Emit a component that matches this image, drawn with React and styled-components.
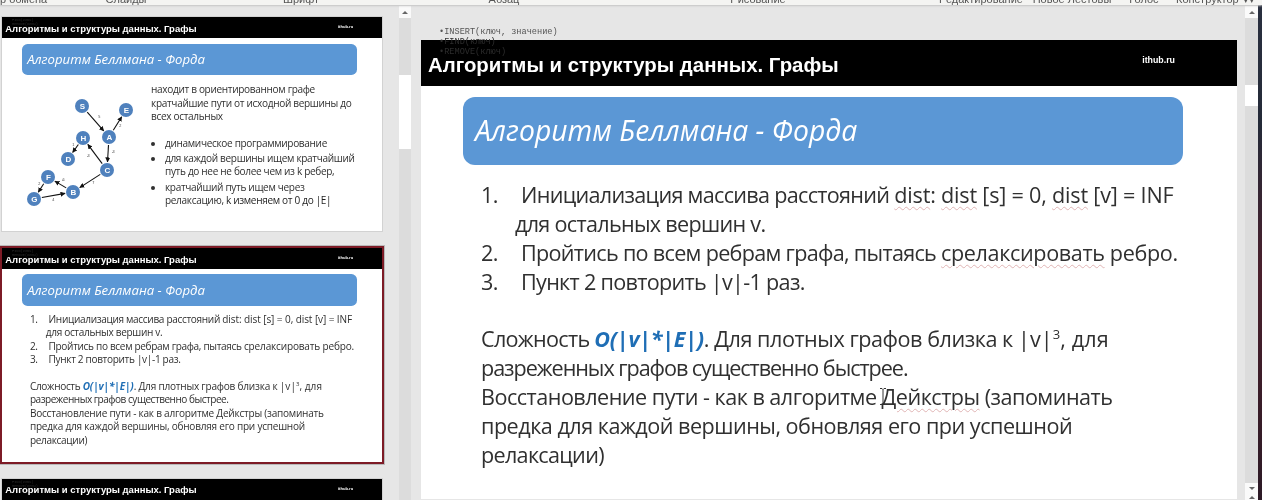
import React from "react";
import styled, { createGlobalStyle } from "styled-components";

const Global = createGlobalStyle`
  html, body { margin: 0; padding: 0; background: #e6e6e6; }
  body { width: 1262px; height: 500px; overflow: hidden; }
`;

const Page = styled.div`
  position: relative;
  width: 1262px;
  height: 500px;
  display: flex;
  flex-direction: column;
  overflow: hidden;
  background: #e6e6e6;
  filter: blur(0.35px);
`;

const Ribbon = styled.div`
  position: relative;
  z-index: 3;
  height: 5px;
  flex: none;
  display: flex;
  align-items: flex-start;
  overflow: hidden;
  background: #f4f4f2;
  box-shadow: 0 1px 2px #c4c4c4;
  font: 11px "Liberation Sans", sans-serif;
  color: #555;
`;

const RibbonGroup = styled.div`
  width: ${(p) => p.$w}px;
  flex: none;
  height: 11px;
  margin-top: -7px;
  line-height: 12px;
  white-space: nowrap;
  text-align: ${(p) => (p.$left ? "left" : "center")};
`;

const Work = styled.div`
  flex: 1;
  min-height: 0;
  display: flex;
`;

const SlideList = styled.div`
  width: 399px;
  flex: none;
  padding: 12px 0 0 0;
  overflow: hidden;
`;

const ThumbFrame = styled.div`
  position: relative;
  width: 380px;
  margin: 0 0 17px 2px;
  outline: ${(p) => (p.$active ? "2px solid #7d1b26" : "1px solid #d2d2d2")};
  box-shadow: ${(p) => (p.$active ? "0 0 0 3px #b9b9b9" : "none")};
`;

const ThumbZoom = styled.div`
  zoom: 0.4657;
  background: #fff;
`;

const ThumbGhost = styled.div`
  position: absolute;
  left: 10px;
  top: 1px;
  font: 3.6px/4px "Liberation Mono", monospace;
  color: #2a2a2a;
`;

const Scroll = styled.div`
  width: ${(p) => p.$w}px;
  flex: none;
  margin-top: 1px;
  display: flex;
  flex-direction: column;
  background: #dcdcdc;
`;

const ScrollBtn = styled.div`
  height: ${(p) => p.$h || 12}px;
  flex: none;
  background: #fafafa;
  display: flex;
  align-items: center;
  justify-content: center;
  &::before {
    content: "";
    border-left: 3px solid transparent;
    border-right: 3px solid transparent;
    border-${(p) => (p.$down ? "top" : "bottom")}: 3px solid #666;
  }
`;

const ScrollGap = styled.div`
  height: ${(p) => p.$h}px;
  flex: none;
`;

const ScrollSpring = styled.div`
  flex: 1;
`;

const ScrollThumb = styled.div`
  height: ${(p) => p.$h}px;
  flex: none;
  background: #fff;
`;

const EdgeStrip = styled.div`
  width: 4px;
  flex: none;
  margin-top: -5px;
  background: linear-gradient(#2a3040 0%, #242a38 25%, #4a1f2c 55%, #2c1a26 100%);
`;

const Stage = styled.div`
  position: relative;
  flex: 1;
  min-width: 0;
  padding: 35px 8px 0 10px;
  overflow: hidden;
`;

const Ghost = styled.ul`
  position: absolute;
  left: 28px;
  top: 22px;
  margin: 0;
  padding: 0;
  list-style: none;
  font: 8.6px/10px "Liberation Mono", monospace;
  color: #555;
  z-index: 2;
  li:nth-child(n + 2) { color: #2c2c2c; }
`;

const Cursor = styled.svg`
  position: absolute;
  left: 468px;
  top: 383px;
  z-index: 2;
`;

const SlideBox = styled.div`
  background: #fff;
  width: 816px;
  height: 459px;
  overflow: hidden;
`;

const Header = styled.div`
  height: 46px;
  background: #000;
  color: #fff;
  display: flex;
  align-items: flex-start;
  justify-content: space-between;
  padding: 0 62px 0 7px;
  font-family: "Liberation Sans", Arial, sans-serif;
  font-weight: 700;
`;

const HeaderTitle = styled.div`
  font-size: 20.4px;
  line-height: 46px;
  padding-top: 2px;
`;

const HeaderSite = styled.div`
  font-size: 8.8px;
  line-height: 41px;
`;

const Banner = styled.div`
  margin: 11px 54px 0 42px;
  height: 68px;
  box-sizing: border-box;
  padding: 0 0 2px 12px;
  border-radius: 12px;
  background: #5b97d5;
  color: #fff;
  display: flex;
  align-items: center;
  font: italic 400 28.3px "Open Sans", sans-serif;
`;

const Body = styled.div`
  padding: 15px 20px 0 60px;
  color: #303030;
  font: 21.6px/29px "Open Sans", sans-serif;
  letter-spacing: -0.7px;
`;

const Numbered = styled.ol`
  margin: 0 0 28px 0;
  padding: 0;
  list-style: none;
`;

const NumberedItem = styled.li`
  padding-left: 34px;
  text-indent: -34px;
  &::before { content: attr(data-n); display: inline-block; width: 40px; text-indent: 0; }
`;

const Squiggle = styled.span`
  text-decoration: underline wavy #e0b4b4 1px;
  text-underline-offset: 3px;
`;

const Spaced = styled.span`
  letter-spacing: ${(p) => p.$ls}px;
`;

const Complexity = styled.b`
  color: #1f6eb5;
  font-style: italic;
  font-weight: 700;
  letter-spacing: -0.3px;
`;

const Sup = styled.sup`
  font-size: 13px;
  line-height: 0;
`;

const Para = styled.p`
  margin: 0;
`;

const Columns = styled.div`
  display: grid;
  grid-template-columns: 320px 1fr;
  color: #303030;
  font: 21.6px/29px "Open Sans", sans-serif;
  letter-spacing: -0.7px;
`;

const GraphSvg = styled.svg`
  display: block;
  margin: 36px 0 0 48px;
`;

const Intro = styled.div`
  margin: 17px 0 28px 0;
`;

const Bullets = styled.ul`
  margin: 0;
  padding: 0 0 0 30px;
  li { margin-bottom: 4px; }
`;

const Dark = styled.span`
  color: #1e1e1e;
`;

const nodes = {
  S: [82, 106], E: [126, 110], A: [109, 137], H: [83, 138], D: [68, 159],
  C: [107, 170], F: [48, 177], B: [73, 192], G: [34, 199],
};
const edges = [
  ["S", "A", "5", 99, 118], ["A", "E", "2", 120, 127], ["A", "C", "-3", 113, 153],
  ["C", "H", "-3", 88, 157], ["H", "D", "1", 73, 146], ["C", "B", "7", 93, 184],
  ["B", "F", "-6", 63, 181], ["F", "G", "2", 39, 185], ["G", "B", "4", 53, 201],
];

function Graph() {
  const ox = 24, oy = 92, k = 1 / 0.4657;
  return (
    <GraphSvg width={240} height={270} viewBox={`${ox} ${oy} ${240 / k} ${270 / k}`}>
      <defs>
        <marker id="arrow" markerUnits="userSpaceOnUse" markerWidth="5" markerHeight="5" refX="4.6" refY="2.5" orient="auto">
          <path d="M0 0L5 2.5L0 5z" fill="#111" />
        </marker>
      </defs>
      {edges.map(([a, b, w, lx, ly]) => {
        const [x1, y1] = nodes[a];
        const [x2, y2] = nodes[b];
        const d = Math.hypot(x2 - x1, y2 - y1);
        const ux = (x2 - x1) / d, uy = (y2 - y1) / d;
        return (
          <g key={a + b}>
            <line x1={x1 + ux * 8} y1={y1 + uy * 8} x2={x2 - ux * 8} y2={y2 - uy * 8} stroke="#111" strokeWidth="1.1" markerEnd="url(#arrow)" />
            <text x={lx} y={ly} fontSize="3.8" fill="#444" textAnchor="middle" fontFamily="Liberation Sans">{w}</text>
          </g>
        );
      })}
      {Object.entries(nodes).map(([n, [x, y]]) => (
        <g key={n}>
          <circle cx={x} cy={y} r="7" fill="#4f81bd" />
          <text x={x} y={y + 2.9} fontSize="8" fontWeight="700" fill="#fff" textAnchor="middle" fontFamily="Liberation Sans">{n}</text>
        </g>
      ))}
    </GraphSvg>
  );
}

function Chrome({ children }) {
  return (
    <SlideBox>
      <Header>
        <HeaderTitle>Алгоритмы и структуры данных. Графы</HeaderTitle>
        <HeaderSite>ithub.ru</HeaderSite>
      </Header>
      <Banner>Алгоритм Беллмана - Форда</Banner>
      {children}
    </SlideBox>
  );
}

function Bellman({ squiggles }) {
  const W = squiggles ? Squiggle : React.Fragment;
  return (
    <Body>
      <Numbered>
        <NumberedItem data-n="1.">
          Инициализация массива расстояний{" "}
          <Spaced $ls={-0.2}><W>dist</W>: <W>dist</W> [s] = 0, <W>dist</W> [v] = INF</Spaced>
          <br />для остальных вершин v.
        </NumberedItem>
        <NumberedItem data-n="2.">
          Пройтись по всем ребрам графа, пытаясь <Spaced $ls={-0.37}><W>срелаксировать</W> ребро.</Spaced>
        </NumberedItem>
        <NumberedItem data-n="3.">Пункт 2 повторить |v|-1 раз.</NumberedItem>
      </Numbered>
      <Para>
        Сложность <Complexity>O(|v|*|E|)</Complexity>
        <Spaced $ls={-0.46}>. Для плотных графов близка к </Spaced>
        <Spaced $ls={0.1}>|v|<Sup>3</Sup>, для</Spaced>
        <br /><Spaced $ls={-1.05}>разреженных графов существенно быстрее.</Spaced>
      </Para>
      <Para>
        <Spaced $ls={-0.51}>Восстановление пути - как в алгоритме <W>Дейкстры</W> (запоминать</Spaced>
        <br /><Spaced $ls={-0.5}>предка для каждой вершины, обновляя его при успешной</Spaced>
        <br />релаксации)
      </Para>
    </Body>
  );
}

function ThumbNoise() {
  return (
    <ThumbGhost>
      <div>FIND(ключ)</div>
      <div>REMOVE(ключ)</div>
    </ThumbGhost>
  );
}

export default function App() {
  return (
    <Page>
      <Global />
      <Ribbon>
        <RibbonGroup $w={72} $left>р обмена</RibbonGroup>
        <RibbonGroup $w={108}>Слайды</RibbonGroup>
        <RibbonGroup $w={242}>Шрифт</RibbonGroup>
        <RibbonGroup $w={164}>Абзац</RibbonGroup>
        <RibbonGroup $w={344}>Рисование</RibbonGroup>
        <RibbonGroup $w={102}>Редактирование</RibbonGroup>
        <RibbonGroup $w={80}>Новое Лестовы</RibbonGroup>
        <RibbonGroup $w={64}>Голос</RibbonGroup>
        <RibbonGroup $w={56}>Конструктор</RibbonGroup>
        <RibbonGroup $w={34}>▾▾</RibbonGroup>
      </Ribbon>
      <Work>
        <SlideList>
          <ThumbFrame>
            <ThumbZoom>
              <Chrome>
                <Columns>
                  <Graph />
                  <div>
                    <Intro>
                      находит в ориентированном графе<br />
                      кратчайшие пути от исходной вершины до<br />
                      всех остальных
                    </Intro>
                    <Bullets>
                      <li>динамическое программирование</li>
                      <li>для каждой вершины ищем кратчайший<br />путь до нее не более чем из k ребер,</li>
                      <li>кратчайший путь ищем через<br />релаксацию, <Dark>k изменяем от 0 до |E|</Dark></li>
                    </Bullets>
                  </div>
                </Columns>
              </Chrome>
            </ThumbZoom>
            <ThumbNoise />
          </ThumbFrame>
          <ThumbFrame $active>
            <ThumbZoom>
              <Chrome><Bellman /></Chrome>
            </ThumbZoom>
            <ThumbNoise />
          </ThumbFrame>
          <ThumbFrame>
            <ThumbZoom>
              <Chrome />
            </ThumbZoom>
            <ThumbNoise />
          </ThumbFrame>
        </SlideList>
        <Scroll $w={12}>
          <ScrollBtn />
          <ScrollGap $h={57} />
          <ScrollThumb $h={74} />
        </Scroll>
        <Stage>
          <Ghost>
            <li>•INSERT(ключ, значение)</li>
            <li>•FIND(ключ)</li>
            <li>•REMOVE(ключ)</li>
          </Ghost>
          <Chrome><Bellman squiggles /></Chrome>
          <Cursor width="8" height="17" viewBox="0 0 8 17">
            <path d="M1 .5h2l1 1 1-1h2M4 1.5v14M1 16.5h2l1-1 1 1h2" fill="none" stroke="#333" strokeWidth="1" />
          </Cursor>
        </Stage>
        <Scroll $w={13}>
          <ScrollBtn />
          <ScrollGap $h={67} />
          <ScrollThumb $h={21} />
          <ScrollSpring />
          <ScrollBtn $down $h={11} />
          <ScrollBtn $h={6} />
        </Scroll>
        <EdgeStrip />
      </Work>
    </Page>
  );
}
